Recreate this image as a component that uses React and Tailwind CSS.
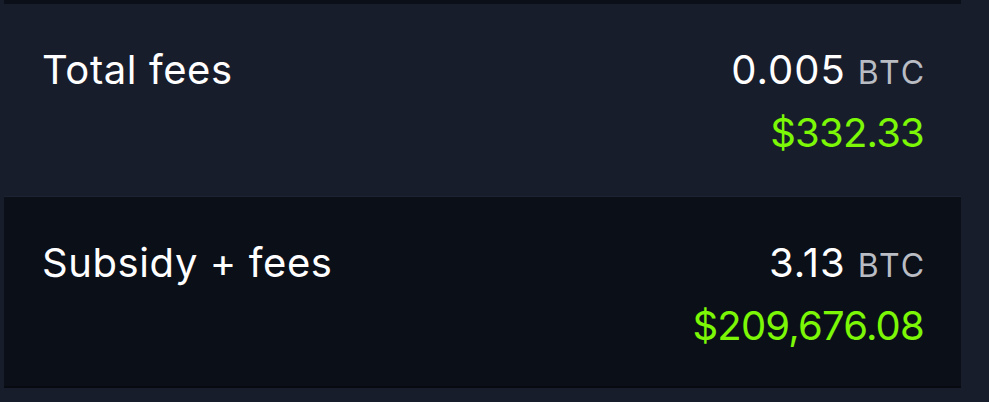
export default function App() {
  const rows = [
    { label: "Total fees", btc: "0.005", usd: "$332.33", dark: false },
    { label: "Subsidy + fees", btc: "3.13", usd: "$209,676.08", dark: true },
  ];
  return (
    <div
      className="w-[989px] h-[402px] bg-[#181d2b] overflow-hidden"
      style={{ fontFamily: "Inter, 'Noto Sans', sans-serif" }}
    >
      <div className="ml-[4px] w-[957px] flex flex-col">
        <div className="h-[4px] bg-[#0b0f18]" />
        {rows.map((r) => (
          <div
            key={r.label}
            className={
              "h-[192px] flex justify-between pl-[38px] pr-[37px] pt-[42px] " +
              (r.dark ? "bg-[#0b0f18] border-t border-[#1d2333] border-b-[2px] border-b-[#070a10]" : "")
            }
          >
            <div className="text-[40px] leading-[48px] text-white tracking-[0.6px]">{r.label}</div>
            <div className="flex flex-col items-end gap-[12px]">
              <div className="leading-[48px] text-white text-[40px] tracking-[1px]">
                {r.btc}
                <span className="text-[32px] text-[#b9bcc3] ml-[12px] -mr-[2px] tracking-[2px]">BTC</span>
              </div>
              <div className="text-[40px] leading-[48px] text-[#7cf807] tracking-[-0.8px]">{r.usd}</div>
            </div>
          </div>
        ))}
      </div>
    </div>
  );
}
